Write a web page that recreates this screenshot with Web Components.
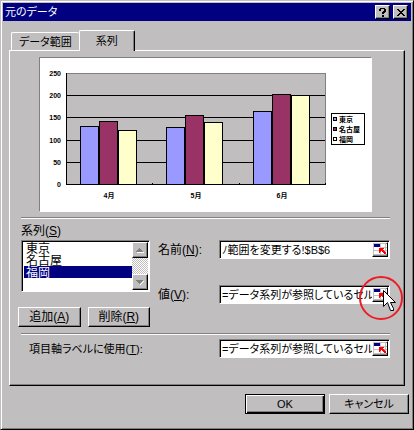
<!DOCTYPE html>
<html lang="ja">
<head>
<meta charset="utf-8">
<meta name="viewport" content="width=device-width, initial-scale=1">
<title>元のデータ</title>
<style>
  body {
    margin: 0;
    background: #c0bebf;
    color: #000;
    font: 11px/14px "Liberation Sans", "Noto Sans CJK JP", sans-serif;
    font-feature-settings: "palt";
  }
</style>
</head>
<body>
<win-dialog caption="元のデータ">
  <tab-panel tabs="データ範囲,系列" active="1">
    <column-chart max="250" step="50">
      <script type="application/json">
        {
          "categories": ["4月", "5月", "6月"],
          "series": [
            { "name": "東京", "color": "#9999ff", "values": [131, 129, 165] },
            { "name": "名古屋", "color": "#993366", "values": [142, 155, 202] },
            { "name": "福岡", "color": "#ffffcc", "values": [122, 140, 200] }
          ]
        }
      </script>
    </column-chart>
    <series-editor>
      <series-list slot="list" label="系列" key="S" items="東京,名古屋,福岡" selected="2"></series-list>
      <win-button slot="actions" key="A">追加</win-button>
      <win-button slot="actions" key="R">削除</win-button>
      <range-field slot="fields" label="名前" key="N" value="ﾉ範囲を変更する!$B$6"></range-field>
      <range-field slot="fields" label="値" key="V" value="=データ系列が参照しているセル">
        <click-marker></click-marker>
      </range-field>
    </series-editor>
    <range-field class="axis" wide label="項目軸ラベルに使用" key="T" value="=データ系列が参照しているセル"></range-field>
  </tab-panel>
  <win-button slot="footer" default>OK</win-button>
  <win-button slot="footer">キャンセル</win-button>
</win-dialog>

<script>
const RAISED = `
  border: 1px solid; border-color: #fff #000 #000 #fff;
  box-shadow: inset -1px -1px #808080;
  background: #c0bebf;
`;
const SUNKEN = `
  border: 1px solid; border-color: #808080 #fff #fff #808080;
  box-shadow: inset 1px 1px #000;
  background: #fff;
`;
const RESET = `
  * { box-sizing: border-box; }
  button, input, select {
    margin: 0; padding: 0; border: 0; border-radius: 0; outline: 0;
    color: inherit; font: inherit; font-feature-settings: inherit;
  }
`;

const hotkey = (key) => (key ? `(<u>${key}</u>)` : "");

class WinElement extends HTMLElement {
  constructor() {
    super();
    this.attachShadow({ mode: "open" });
  }
  attr(name, fallback = "") {
    return this.getAttribute(name) ?? fallback;
  }
  connectedCallback() {
    this.shadowRoot.innerHTML = `<style>${RESET}</style>${this.template()}`;
  }
}

class WinDialog extends WinElement {
  template() {
    return `
      <style>
        :host {
          display: block; box-sizing: border-box; padding: 2px 2px 15px;
          border: 1px solid; border-color: #c0bebf #000 #000 #c0bebf;
          box-shadow: inset 1px 1px #fff, inset -1px -1px #808080;
        }
        header {
          display: flex; align-items: center; gap: 3px; height: 18px; padding: 0 3px 0 2px;
          background: #000080; color: #fff;
        }
        h1 { flex: 1; margin: 0; font: inherit; }
        header button { display: grid; place-items: center; width: 15px; height: 14px; color: #000; ${RAISED} }
        main { padding: 9px 6px 0; }
        footer { display: flex; justify-content: flex-end; gap: 4px; padding: 8px 2px 0; }
        ::slotted([slot="footer"]) { width: 80px; }
      </style>
      <header>
        <h1>${this.attr("caption")}</h1>
        <button aria-label="ヘルプ">
          <svg width="7" height="9" shape-rendering="crispEdges"><path d="M1 0h5v1h1v3h-1v1h-1v1h-2v-2h1v-1h1v-2h-3v2h-2v-2h1zM3 7h2v2h-2z"/></svg>
        </button>
        <button aria-label="閉じる">
          <svg width="8" height="7" shape-rendering="crispEdges"><path d="M0 0h2v1h1v1h2v-1h1v-1h2v1h-1v1h-1v1h-1v1h1v1h1v1h1v1h-2v-1h-1v-1h-2v1h-1v1h-2v-1h1v-1h1v-1h1v-1h-1v-1h-1v-1h-1z"/></svg>
        </button>
      </header>
      <main><slot></slot></main>
      <footer><slot name="footer"></slot></footer>
    `;
  }
}

class WinButton extends WinElement {
  template() {
    return `
      <style>
        :host { display: block; }
        :host([key]) { font-size: 12px; }
        button { display: block; width: 100%; height: 20px; ${RAISED} }
        :host([default]) button { border-color: #000; box-shadow: inset 1px 1px #fff, inset -1px -1px #000, inset -2px -2px #808080; }
      </style>
      <button><slot></slot>${hotkey(this.attr("key"))}</button>
    `;
  }
}

class TabPanel extends WinElement {
  template() {
    const active = Number(this.attr("active", 0));
    return `
      <style>
        :host { display: block; }
        nav { display: flex; align-items: flex-end; padding-left: 2px; }
        nav button {
          height: 18px; padding: 0 7px; background: none;
          border: 1px solid #fff; border-width: 1px 0 0 1px; border-radius: 2px 2px 0 0;
        }
        nav button[aria-selected="true"] {
          position: relative; height: 21px; margin-bottom: -1px; padding: 0 16px;
          background: #c0bebf; border-right: 1px solid #000; box-shadow: inset -1px 0 #808080;
        }
        section {
          padding: 6px 14px 27px 11px; border: 1px solid; border-color: #fff #000 #000 #fff;
          box-shadow: inset -1px -1px #808080;
        }
        ::slotted(.axis) { margin-top: 5px; }
      </style>
      <nav role="tablist">
        ${this.attr("tabs").split(",").map((tab, i) => `
          <button role="tab" aria-selected="${i === active}">${tab}</button>`).join("")}
      </nav>
      <section role="tabpanel"><slot></slot></section>
    `;
  }
}

class ColumnChart extends WinElement {
  get data() {
    return JSON.parse(this.querySelector("script").textContent);
  }

  template() {
    const { categories, series } = this.data;
    const max = Number(this.attr("max"));
    const step = Number(this.attr("step"));
    const left = 26, right = 285, top = 15, bottom = 126, bar = 19;
    const y = (value) => Math.round(bottom - (value / max) * (bottom - top));
    const band = (right - left) / categories.length;
    const ticks = Array.from({ length: max / step + 1 }, (_, i) => i * step);

    return `
      <style>
        :host { display: block; margin: 0 18px; border: 1px solid; border-color: #808080 #fff #fff #808080; background: #fff; }
        svg { display: block; width: 100%; height: auto; }
        text { font: 700 7px "Liberation Sans", "Noto Sans CJK JP", sans-serif; }
      </style>
      <svg viewBox="0 0 331 153" role="img" aria-label="系列グラフ">
        <g shape-rendering="crispEdges">
          <rect x="${left + 0.5}" y="${top + 0.5}" width="${right - left}" height="${bottom - top}" fill="#c0bebf" stroke="#808080"/>
          ${ticks.slice(0, -1).map((t) => `<path d="M${left} ${y(t) + 0.5}H${right}" stroke="#000"/>`).join("")}
          <path d="M${left + 0.5} ${top}V${bottom}" stroke="#000"/>
          ${categories.map((_, c) => `<path d="M${Math.round(left + band * (c + 1)) + 0.5} ${bottom - 1}v2" stroke="#000"/>`).join("")}
          ${categories.map((_, c) => series.map((s, i) => {
            const x = Math.round(left + band * c) + 14 + i * bar;
            const h = bottom - y(s.values[c]);
            return `<rect x="${x + 0.5}" y="${bottom - h + 0.5}" width="${bar - 1}" height="${h}" fill="${s.color}" stroke="#000"/>`;
          }).join("")).join("")}
          <rect x="291.5" y="55.5" width="33" height="31" fill="#fff" stroke="#000"/>
          ${series.map((s, i) => `<rect x="293.5" y="${59.5 + i * 10}" width="3" height="3" fill="${s.color}" stroke="#000"/>`).join("")}
        </g>
        ${ticks.map((t) => `<text x="21" y="${y(t) + 3}" text-anchor="end">${t}</text>`).join("")}
        ${categories.map((name, c) => `<text x="${left + Math.round(band * (c + 0.5))}" y="140" text-anchor="middle">${name}</text>`).join("")}
        ${series.map((s, i) => `<text x="299" y="${64 + i * 10}">${s.name}</text>`).join("")}
      </svg>
    `;
  }
}

class SeriesEditor extends WinElement {
  template() {
    return `
      <style>
        :host {
          display: grid; grid-template-columns: 129px minmax(0, 1fr); column-gap: 8px;
          margin-top: 5px; padding: 5px 0 6px;
          border: solid #808080; border-width: 1px 0;
          box-shadow: inset 0 1px #fff, 0 1px #fff;
        }
        .left { display: grid; gap: 15px; }
        .actions { display: grid; grid-template-columns: 1fr 1fr; gap: 7px; margin-left: -3px; }
        .fields { display: flex; flex-direction: column; gap: 26px; padding-top: 17px; }
      </style>
      <div class="left">
        <slot name="list"></slot>
        <div class="actions"><slot name="actions"></slot></div>
      </div>
      <div class="fields"><slot name="fields"></slot></div>
    `;
  }
}

class SeriesList extends WinElement {
  template() {
    const selected = Number(this.attr("selected", -1));
    return `
      <style>
        :host { display: block; font-size: 12px; }
        label { display: block; line-height: 16px; }
        .box { display: flex; height: 52px; margin-top: 1px; padding: 1px 1px 1px 2px; ${SUNKEN} }
        select { flex: 1; min-width: 0; height: 48px; background: #fff; overflow: hidden; scrollbar-width: none; }
        option { display: flex; align-items: center; height: 12px; min-height: 12px; padding: 0 2px 2px; }
        option:checked { background: #000080 linear-gradient(#000080, #000080); -webkit-text-fill-color: #fff; }
        .scroll {
          display: flex; flex-direction: column; justify-content: space-between; width: 16px;
          background: repeating-conic-gradient(#fff 0 25%, #c0bebf 0 50%) 0 0 / 2px 2px;
        }
        .scroll button { display: grid; place-items: center; height: 16px; ${RAISED} }
      </style>
      <label for="list">${this.attr("label")}${hotkey(this.attr("key"))}</label>
      <div class="box">
        <select id="list" size="4">
          ${this.attr("items").split(",").map((item, i) => `<option${i === selected ? " selected" : ""}>${item}</option>`).join("")}
        </select>
        <div class="scroll">
          <button aria-label="上へ"><svg width="8" height="5" shape-rendering="crispEdges"><path fill="#fff" d="M1 4h7v1h-7z"/><path fill="#808080" d="M3 0h1v1h1v1h1v1h1v1h-7v-1h1v-1h1v-1h1z"/></svg></button>
          <button aria-label="下へ"><svg width="8" height="5" shape-rendering="crispEdges"><path fill="#fff" d="M7 1h1v1h-1v1h-1v1h-1v1h-1v-1h1v-1h1v-1h1z"/><path fill="#808080" d="M0 0h7v1h-1v1h-1v1h-1v1h-1v-1h-1v-1h-1v-1h-1z"/></svg></button>
        </div>
      </div>
    `;
  }
}

class RangeField extends WinElement {
  template() {
    return `
      <style>
        :host { position: relative; display: grid; grid-template-columns: 61px minmax(0, 1fr); align-items: center; }
        :host([wide]) { grid-template-columns: 190px minmax(0, 1fr); padding-left: 8px; }
        label { font-size: 12px; }
        :host([wide]) label { font-size: 11px; }
        .box { display: flex; height: 19px; padding: 1px 1px 1px 2px; ${SUNKEN} }
        input { flex: 1; min-width: 0; background: none; }
        button { display: grid; place-items: center; width: 16px; ${RAISED} }
      </style>
      <label for="range">${this.attr("label")}${hotkey(this.attr("key"))}:</label>
      <div class="box">
        <input id="range" value="${this.attr("value")}">
        <button aria-label="範囲を選択">
          <svg width="13" height="11" shape-rendering="crispEdges">
            <path fill="#fff" d="M0 0h13v10H0z"/>
            <path fill="#c0bebf" d="M0 6h13v1H0zM6 0h1v10H6zM11 0h1v10h-1zM7 3h6v1H7z"/>
            <path fill="#000080" d="M0 0h6v3H0z"/>
            <path fill="#f00" d="M5 4h5v1H9v1h1v1h1v1h1v2h-2V9H9V8H8V7H7v1H6v1H5z"/>
          </svg>
        </button>
      </div>
      <slot></slot>
    `;
  }
}

// Red ring and mouse pointer laid over the field's picker button
class ClickMarker extends WinElement {
  template() {
    return `
      <style>
        :host { position: absolute; top: -10px; right: -14px; pointer-events: none; }
        svg { display: block; }
      </style>
      <svg width="46" height="46">
        <circle cx="23" cy="23" r="21" fill="none" stroke="#ee1c24" stroke-width="2"/>
        <path transform="translate(25.5 15.5)" d="M0 0v16l4-4 3 8h3v-2l-3-6h5z" fill="#fff" stroke="#000"/>
      </svg>
    `;
  }
}

customElements.define("win-dialog", WinDialog);
customElements.define("win-button", WinButton);
customElements.define("tab-panel", TabPanel);
customElements.define("column-chart", ColumnChart);
customElements.define("series-editor", SeriesEditor);
customElements.define("series-list", SeriesList);
customElements.define("range-field", RangeField);
customElements.define("click-marker", ClickMarker);
</script>
</body>
</html>
